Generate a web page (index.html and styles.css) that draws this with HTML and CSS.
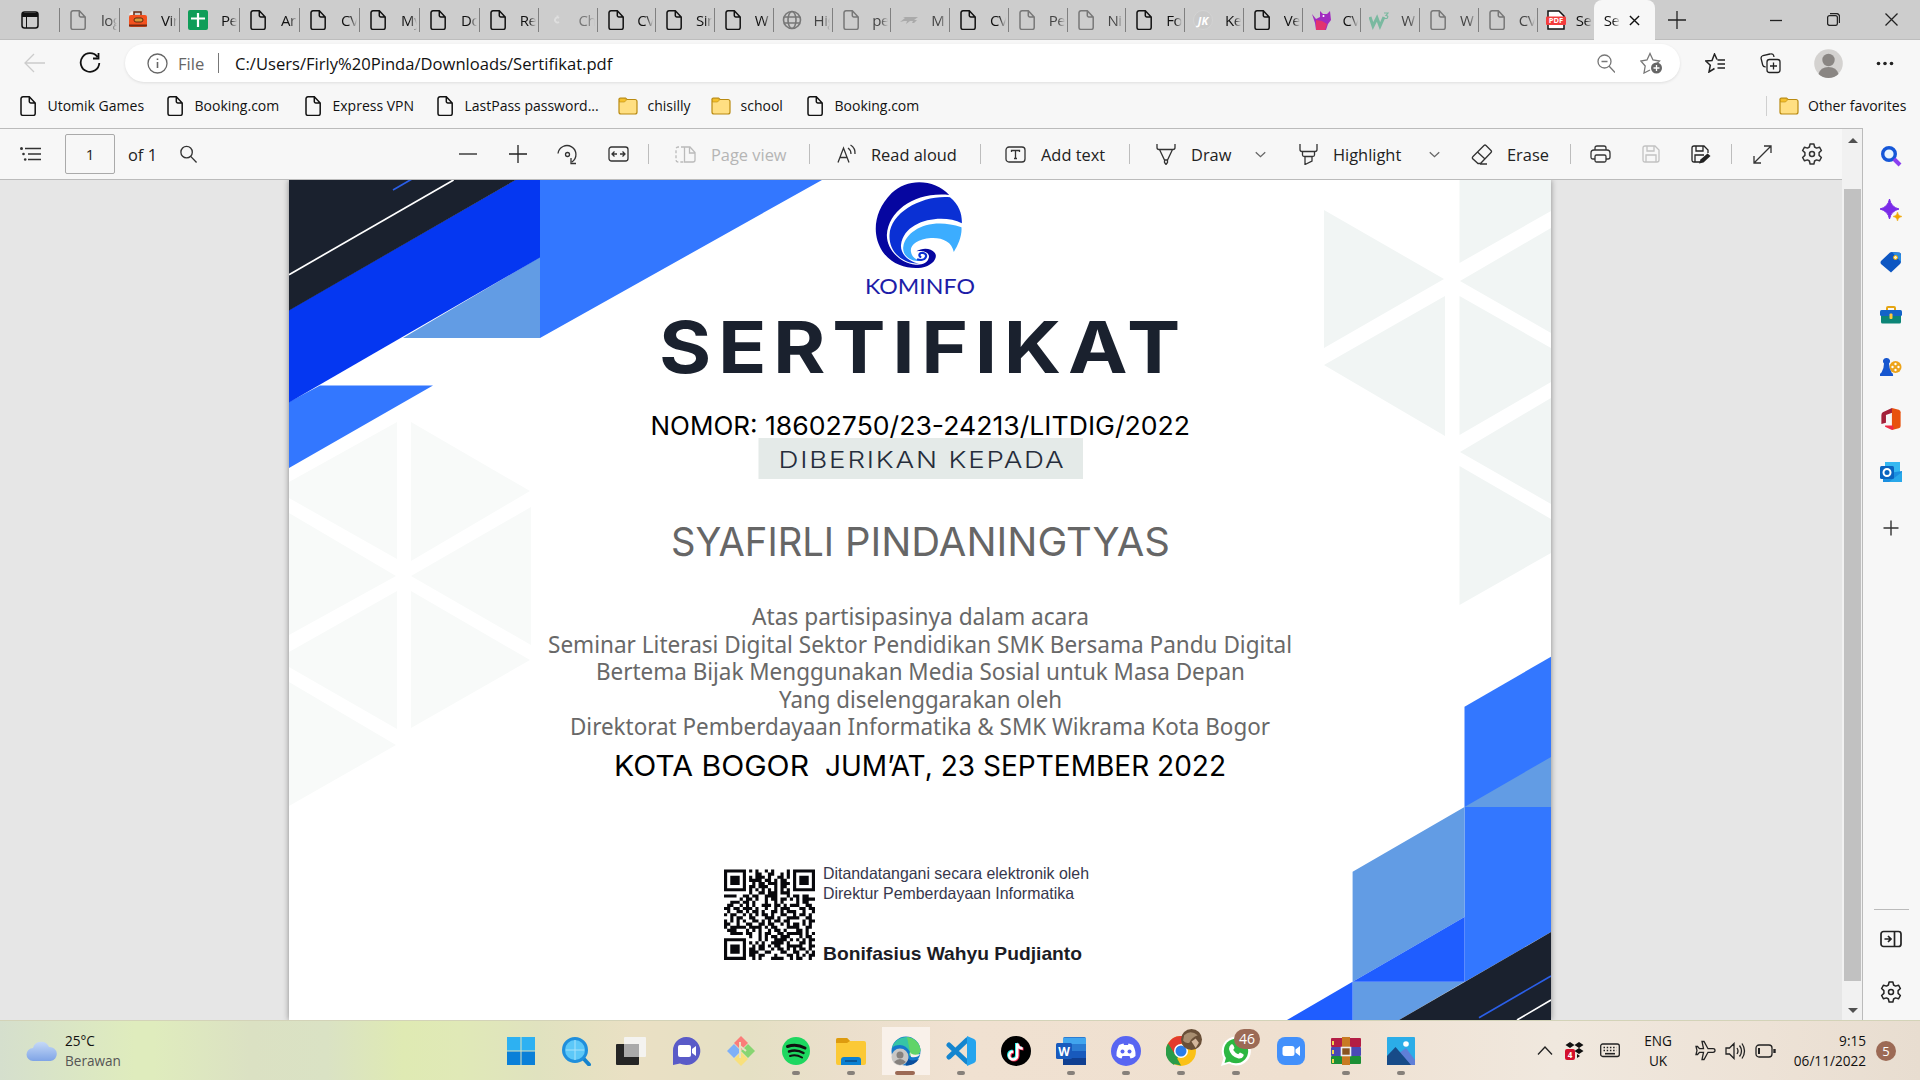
FILE: index.html
```html
<!DOCTYPE html>
<html lang="en">
<head>
<meta charset="utf-8">
<title>Sertifikat.pdf</title>
<link rel="stylesheet" href="styles.css">
</head>
<body>
<svg class="defs" width="0" height="0">
  <defs>
    <symbol id="page" viewBox="0 0 16 20"><path d="M3 .8h6.3L15.200 7v10.400a2 2 0 0 1-2 2H3a2 2 0 0 1-2-2V2.800a2 2 0 0 1 2-2zM9.300.8V5.500a1.500 1.500 0 0 0 1.500 1.500h4.400" fill="none" stroke="currentColor" stroke-width="1.500"/></symbol>
    <symbol id="folder" viewBox="0 0 20 18"><path d="M1 3v12a2 2 0 0 0 2 2h14a2 2 0 0 0 2-2V4.500a2 2 0 0 0-2-2H9L7.500 1H2.500A1.500 1.500 0 0 0 1 3z" fill="#ffdf82" stroke="#b98a10" stroke-width="1.200"/><path d="M1.500 5V2.500Q1.500 1.500 3 1.500h4l1.500 1.500L6.500 5z" fill="#f5c02c" stroke="#b98a10" stroke-width=".6"/></symbol>
    <symbol id="cog" viewBox="0 0 22 22"><path d="M9.100 1h3.800l.7 3 1.900 1.100 3-.9 1.900 3.300-2.300 2.100v2.800l2.300 2.100-1.900 3.300-3-.9-1.900 1.100-.7 3H9.100l-.7-3-1.900-1.100-3 .9-1.900-3.300 2.300-2.100V9.600L1.600 7.500l1.900-3.300 3 .9L8.400 4z" fill="none" stroke="currentColor" stroke-width="1.500" stroke-linejoin="round"/><circle cx="11" cy="11" r="2.500" fill="none" stroke="currentColor" stroke-width="1.500"/></symbol>
    <symbol id="lens" viewBox="0 0 20 20"><g fill="none" stroke="currentColor" stroke-width="1.400"><circle cx="8" cy="7.500" r="6"/><path d="M12.300 12l6.200 6.500"/></g></symbol>
    <symbol id="chev" viewBox="0 0 10 10"><path d="M.7 3l4.300 4 4.300-4" fill="none" stroke="#666" stroke-width="1.200"/></symbol>
  </defs>
</svg>

<header class="tabs">
  <svg class="tabmenu" viewBox="0 0 18 18" width="18" height="18"><rect x="1" y="1" width="16" height="16" rx="2.500" fill="none" stroke="#111" stroke-width="1.500"/><path d="M1 2h16v4H1z" fill="#111"/><path d="M5.500 6v11" stroke="#111"/></svg>
  <div class="tab dim"><svg class="fv"><use href="#page"/></svg><span>log</span></div>
  <div class="tab"><svg class="ic" viewBox="0 0 20 20"><path d="M1 4l3-3 2 2-3 4z" fill="#eee"/><path d="M6 5V2h7v3" fill="none" stroke="#6b2a12" stroke-width="1.500"/><rect x="1" y="5" width="18" height="12" rx="2" fill="#f4511e"/><path d="M1 15.500h18" stroke="#7a2a10" stroke-width="2"/><rect x="6" y="8" width="9" height="4" rx="2" fill="#d99a3d" stroke="#5c2a10"/></svg><span>Vir</span></div>
  <div class="tab"><svg class="ic" viewBox="0 0 20 20"><rect width="20" height="20" rx="2" fill="#0f9d58"/><path d="M10 3v14M3 8.500h14" stroke="#fff" stroke-width="2.200"/></svg><span>Pe</span></div>
  <div class="tab"><svg class="fv"><use href="#page"/></svg><span>Ar</span></div>
  <div class="tab"><svg class="fv"><use href="#page"/></svg><span>CV</span></div>
  <div class="tab"><svg class="fv"><use href="#page"/></svg><span>My</span></div>
  <div class="tab"><svg class="fv"><use href="#page"/></svg><span>Do</span></div>
  <div class="tab"><svg class="fv"><use href="#page"/></svg><span>Re</span></div>
  <div class="tab mute"><svg class="ic" viewBox="0 0 20 20"><path d="M12 8a2.500 2.500 0 1 0 0 4M10.500 5.500v2" fill="none" stroke="#dedede" stroke-width="1.800"/></svg><span>Ch</span></div>
  <div class="tab"><svg class="fv"><use href="#page"/></svg><span>CV</span></div>
  <div class="tab"><svg class="fv"><use href="#page"/></svg><span>Sin</span></div>
  <div class="tab"><svg class="fv"><use href="#page"/></svg><span>W</span></div>
  <div class="tab dim"><svg class="ic" viewBox="0 0 20 20"><g fill="none" stroke="#777" stroke-width="1.600"><circle cx="10" cy="10" r="8.500"/><ellipse cx="10" cy="10" rx="4" ry="8.500"/><path d="M2 7h16M2 13h16"/></g></svg><span>Hig</span></div>
  <div class="tab dim"><svg class="fv"><use href="#page"/></svg><span>pe</span></div>
  <div class="tab dim"><svg class="ic" viewBox="0 0 20 20"><path d="M1 12l5-4-2-1h15l-4 3h3l-3 3h-2l1-2h-3l-4 3 1-3H5z" fill="#aaa"/></svg><span>M</span></div>
  <div class="tab"><svg class="fv"><use href="#page"/></svg><span>CV</span></div>
  <div class="tab dim"><svg class="fv"><use href="#page"/></svg><span>Pe</span></div>
  <div class="tab dim"><svg class="fv"><use href="#page"/></svg><span>Ni</span></div>
  <div class="tab"><svg class="fv"><use href="#page"/></svg><span>Fo</span></div>
  <div class="tab"><svg class="ic" viewBox="0 0 20 20"><circle cx="10" cy="10" r="9.500" fill="#c9c9c9" stroke="#d6d6d6" stroke-width=".6"/><text x="10" y="14.500" class="jk">JK</text></svg><span>Ke</span></div>
  <div class="tab"><svg class="fv"><use href="#page"/></svg><span>Ve</span></div>
  <div class="tab"><svg class="ic" viewBox="0 0 20 20"><path d="M1 4l4 5 4-2V1l3 3h4l3-3 1 9-3 4-2 6H5L4 13z" fill="#a22bc0"/><path d="M5 10l6 1 5 3-2 6H5z" fill="#e2336f"/><circle cx="12.500" cy="6" r="1" fill="#fff"/></svg><span>CV</span></div>
  <div class="tab dim"><svg class="ic" viewBox="0 0 20 20"><path d="M1 7l3 9 4-8 3 8 4-9" fill="none" stroke="#7ab9a0" stroke-width="3"/><path d="M15 3h4l-2 2.500q3 0 1 3h-3" fill="none" stroke="#7ab9a0" stroke-width="1.200"/></svg><span>W</span></div>
  <div class="tab dim"><svg class="fv"><use href="#page"/></svg><span>W</span></div>
  <div class="tab dim"><svg class="fv"><use href="#page"/></svg><span>CV</span></div>
  <div class="tab"><svg class="ic" viewBox="0 0 20 20"><path d="M2 1h11l5 5v13H2z" fill="#fff" stroke="#111" stroke-width="1.500"/><rect y="6.500" width="20" height="8.500" rx="1" fill="#f33d3d"/><text x="10" y="13.300" class="pdft">PDF</text></svg><span>Se</span></div>
  <div class="tab active"><span>Se</span><svg viewBox="0 0 12 12" width="11" height="11"><path d="M1 1l10 10M11 1L1 11" stroke="#111" stroke-width="1.500"/></svg></div>
  <svg class="g w18" viewBox="0 0 18 18"><path d="M9 0v18M0 9h18"/></svg>
  <svg class="g w12" viewBox="0 0 12 12"><path d="M0 6.500h12"/></svg>
  <svg class="g w13" viewBox="0 0 13 13"><rect x=".6" y="2.600" width="9.800" height="9.800" rx="2"/><path d="M3 .6h6.500a3 3 0 0 1 3 3V10"/></svg>
  <svg class="g w13" viewBox="0 0 13 13"><path d="M.5.500l12 12M12.500.500l-12 12"/></svg>
</header>

<div class="nav">
  <svg class="l" width="21" height="20" viewBox="0 0 21 20" stroke="#ccc"><path d="M21 10H1M10 1L1 10l9 9"/></svg>
  <svg class="l reload" width="22" height="22" viewBox="0 0 22 22" stroke="#111"><path d="M18.500 5A9.300 9.300 0 1 0 20.300 11M19.500 1v5.500H14"/></svg>
  <div class="omni">
    <svg class="l" width="21" height="21" viewBox="0 0 21 21" stroke="#666"><circle cx="10.500" cy="10.500" r="9.500"/><path d="M10.500 9v6M10.500 5.500v1.600" stroke-width="1.600"/></svg>
    <span class="file">File</span><i></i><span class="url">C:/Users/Firly%20Pinda/Downloads/Sertifikat.pdf</span>
    <svg class="l" width="18" height="19" viewBox="0 0 18 19" stroke="#777"><circle cx="7.500" cy="7.500" r="6.500"/><path d="M12 12l6 6.500M4.500 7.500h6"/></svg>
    <svg class="l" width="23" height="22" viewBox="0 0 23 22" stroke="#777"><path d="M10 18l-6 3 1.200-7L.8 9l6.200-1L10 1.500 13 8l6.500 1-2.500 2.500"/><circle cx="16.500" cy="16" r="5.500" fill="#666" stroke="none"/><path d="M16.500 13v6M13.500 16h6" stroke="#fff"/></svg>
  </div>
  <svg class="l" width="21" height="20" viewBox="0 0 21 20" stroke="#222"><path d="M12 6.500L9.500 1 7 7.500.8 8l4.500 4.200L4 19l5.500-3.500M12.500 7H20M12.500 11H20M12.500 15H20" stroke-width="1.500"/></svg>
  <svg class="l" width="21" height="21" viewBox="0 0 21 21" stroke="#222"><rect x="7" y="6.500" width="13" height="13" rx="2.500"/><path d="M13.500 9.500v7M10 13h7M14 4q-.5-4-4-3L3 2.500Q.5 3.500 1.200 6l1.500 6q.5 2 3 1.800"/></svg>
  <svg class="l" width="29" height="29" viewBox="0 0 29 29"><circle cx="14.500" cy="14.500" r="14.300" fill="#d4d2d0"/><circle cx="14.500" cy="11" r="6.200" fill="#8a8683"/><path d="M4.500 25q2-7 10-7t10 7q-4 4-10 4t-10-4z" fill="#8a8683"/></svg>
  <svg class="l" width="18" height="5" viewBox="0 0 18 5"><g fill="#222"><circle cx="2.500" cy="2.500" r="1.800"/><circle cx="9" cy="2.500" r="1.800"/><circle cx="15.500" cy="2.500" r="1.800"/></g></svg>
</div>

<div class="favs">
  <span><svg class="pg"><use href="#page"/></svg>Utomik Games</span>
  <span><svg class="pg"><use href="#page"/></svg>Booking.com</span>
  <span><svg class="pg"><use href="#page"/></svg>Express VPN</span>
  <span><svg class="pg"><use href="#page"/></svg>LastPass password...</span>
  <span><svg class="fo"><use href="#folder"/></svg>chisilly</span>
  <span><svg class="fo"><use href="#folder"/></svg>school</span>
  <span><svg class="pg"><use href="#page"/></svg>Booking.com</span>
  <span class="other"><svg class="fo"><use href="#folder"/></svg>Other favorites</span>
</div>

<main class="main">
  <section class="viewer">
    <div class="pdfbar">
      <svg class="l" width="21" height="16" viewBox="0 0 21 16" stroke="#333"><path d="M5 2.500h16M8 8h13M8 13.500h13"/><g fill="#333" stroke="none"><circle cx="1.500" cy="2.500" r="1.500"/><circle cx="3.500" cy="8" r="1.300"/><circle cx="5.200" cy="13.500" r="1.300"/></g></svg>
      <div class="num">1</div>
      <span>of 1</span>
      <svg class="s19"><use href="#lens"/></svg>
      <svg class="l" width="18" height="18" viewBox="0 0 18 18" stroke="#222"><path d="M0 9h18"/></svg>
      <svg class="l" width="18" height="18" viewBox="0 0 18 18" stroke="#222"><path d="M0 9h18M9 0v18"/></svg>
      <svg class="l" width="22" height="22" viewBox="0 0 22 22" stroke="#333"><path d="M1 10.500A9 9 0 1 1 15 19M14 15v5.500h5"/><circle cx="10.500" cy="11.500" r="2"/></svg>
      <svg class="l" width="21" height="16" viewBox="0 0 21 16" stroke="#333"><rect x="1" y="1" width="19" height="14" rx="2.500"/><path d="M9 8H4M6.500 5.500L4 8l2.500 2.500M12 8h5M14.500 5.500L17 8l-2.500 2.500"/></svg>
      <i></i>
      <svg class="l" width="21" height="17" viewBox="0 0 21 17" stroke="#bbb"><path d="M9 1H3a2 2 0 0 0-2 2v11a2 2 0 0 0 2 2h6" stroke-dasharray="3 2"/><path d="M9.500 1v15H18a2 2 0 0 0 2-2V6.500L15 1zM14.500 1v6H20"/></svg>
      <span class="off">Page view</span>
      <i></i>
      <svg class="l" width="20" height="20" viewBox="0 0 20 20" stroke="#333"><path d="M1 18.500L6.500 4 12 18.500M3 13.500h7M11 4q3 2 3 6M13.500 1q5 3 4.500 9" /></svg>
      <span>Read aloud</span>
      <i></i>
      <svg class="l" width="21" height="17" viewBox="0 0 21 17" stroke="#333"><rect x="1" y="1" width="19" height="15" rx="3"/><path d="M6.500 6V4.500h8V6M10.500 4.500v8M9 12.500h3"/></svg>
      <span>Add text</span>
      <i></i>
      <svg class="l" width="20" height="21" viewBox="0 0 20 21" stroke="#333"><path d="M1 0v3.500q0 2 2 2h14q2 0 2-2V0M3.500 5.500L8.500 16h3l5-10.500M8.500 16v2.500L10 20.500l1.500-2V16"/></svg>
      <span>Draw</span>
      <svg class="cv"><use href="#chev"/></svg>
      <svg class="l" width="19" height="21" viewBox="0 0 19 21" stroke="#333"><path d="M1 0v5.500q0 2 2 2h13q2 0 2-2V0M3.500 7.500V11q0 1.500 2 1.500h8q2 0 2-1.500V7.500M6 12.500v8l7-3.500v-4.500"/></svg>
      <span>Highlight</span>
      <svg class="cv"><use href="#chev"/></svg>
      <svg class="l" width="22" height="21" viewBox="0 0 22 21" stroke="#333"><path d="M2 12.500L13 1.500q1-1 2 0l5 5q1 1 0 2L9.500 19.500H7L1.500 14.500q-.5-1 .5-2zM6.500 8L14 15M9 20h7"/></svg>
      <span>Erase</span>
      <i></i>
      <svg class="l" width="21" height="18" viewBox="0 0 21 18" stroke="#333"><path d="M5 5V3q0-2 2-2h7q2 0 2 2v2M5 14H3q-2 0-2-2V8q0-3 3-3h13q3 0 3 3v4q0 2-2 2h-2"/><rect x="5" y="10" width="11" height="7" rx="1.500"/></svg>
      <svg class="l" width="18" height="18" viewBox="0 0 18 18" stroke="#c2c2c2"><path d="M3 1h10l4 4v10q0 2-2 2H3q-2 0-2-2V3q0-2 2-2zM5 1v5h7V1M4 17v-7h10v7"/></svg>
      <svg class="l" width="20" height="19" viewBox="0 0 20 19" stroke="#222"><path d="M9 17H3q-2 0-2-2V3q0-2 2-2h10l4 4v3M5 1v5h7V1M4 17v-7h9"/><path d="M8 18.500l1.500-4 7-6 3 2.500-7 6.500z" fill="#222" stroke="none"/></svg>
      <i></i>
      <svg class="l" width="19" height="19" viewBox="0 0 19 19" stroke="#333"><path d="M1 18L18 1M11 1h7v7M1 11v7h7"/></svg>
      <svg class="s22"><use href="#cog"/></svg>
    </div>
    <div class="canvas">
      <svg class="cert" width="1262" height="840" viewBox="289 180 1262 840">
        <rect x="289" y="180" width="1262" height="840" fill="#fff"/>
        <path fill="#f8faf9" d="M397 422V559L289 498V482zM411 422L530 491 411 561zM531 507V645L411 576zM289 513L396 576 289 635zM397 591V729L289 667V652zM411 591V728L530 660zM289 682L396 745 289 806z"/>
        <path fill="#f1f5f4" d="M1324 210L1444 279 1324 348zM1459.500 180H1551V211L1459.500 263zM1460 281L1551 228V333zM1324 365L1445 296V436zM1459.500 296L1551 348V382L1459.500 435zM1460 452L1551 398V504zM1459.500 466L1551 519V553L1459.500 605z"/>
        <path fill="#3377ff" d="M540 180H822L540 338zM320 385.500H433L289 468V402z"/>
        <path fill="#629ce4" d="M540 257V338H403z"/>
        <path fill="#0537f1" d="M515 180H540V257.500L289 402.500V310z"/>
        <path fill="#1a212e" d="M289 180H515.500L289 310.500z"/>
        <path d="M289 274.700L453.600 180" stroke="#fff" stroke-width="1.700"/><path d="M393 190L412 179" stroke="#2b5fe8" stroke-width="1.700"/>
        <path fill="#3377ff" d="M1464.500 706.700L1551 656.700V932L1464.500 982z"/>
        <path fill="#629ce4" d="M1464.500 807L1551 757V807zM1352.600 871.700L1464.500 807V917L1352.600 981.700zM1352.600 981.700H1464.500L1399 1020H1352.600z"/>
        <path fill="#1f5dff" d="M1352.600 981.700L1464.500 917V981.700zM1287 1020L1352.600 981.700V1020z"/>
        <path fill="#1a212e" d="M1399 1020L1551 932V1020z"/>
        <path d="M1479 1017.700L1551 976" stroke="#2b5fe8" stroke-width="1.700"/><path d="M1517 1020L1551 1000" stroke="#fff" stroke-width="1.700"/>

        <g transform="translate(640 170) scale(.3827 .3333)">
          <path fill="#0606a0" d="M808 75C770 28 700 22 657 70C610 125 605 195 634 245C660 287 700 297 735 293C765 288 780 262 770 248C760 234 738 233 722 244C738 240 757 246 755 262C752 280 735 286 720 284C680 280 645 240 645 195C650 120 720 65 808 75z"/>
          <path fill="#0a30d4" d="M810 82C835 105 842 135 841 160C790 130 690 150 682 225C680 255 705 276 730 281C680 281 650 240 652 195C655 125 740 75 810 82z"/>
          <path fill="#3cadff" d="M840 172C842 195 832 225 820 246C815 215 790 202 760 204C725 207 705 225 708 245C710 262 722 272 740 270C710 282 684 255 688 230C695 180 760 140 840 172z"/>
          <path fill="none" stroke="#0a30d4" stroke-width="6" d="M724 268C750 276 754 250 738 248C728 248 728 260 735 262"/>
        </g>
        <text class="kom" x="865" y="294" textLength="110" lengthAdjust="spacingAndGlyphs">KOMINFO</text>
        <text class="sert" x="659" y="372.500" textLength="528" lengthAdjust="spacingAndGlyphs">SERTIFIKAT</text>
        <rect x="758.500" y="438" width="324.500" height="41" fill="#e4eae8"/>
        <g class="nom">
          <text x="650.500" y="435" textLength="107" lengthAdjust="spacingAndGlyphs">NOMOR:</text>
          <text x="765" y="435" textLength="425" lengthAdjust="spacingAndGlyphs">18602750/23-24213/LITDIG/2022</text>
        </g>
        <text class="dib" x="778.500" y="467.500" textLength="287" lengthAdjust="spacingAndGlyphs">DIBERIKAN KEPADA</text>
        <g class="name">
          <text x="671" y="556" textLength="163" lengthAdjust="spacingAndGlyphs">SYAFIRLI</text>
          <text x="845" y="556" textLength="325" lengthAdjust="spacingAndGlyphs">PINDANINGTYAS</text>
        </g>
        <g class="desc">
          <text x="752" y="625" textLength="337" lengthAdjust="spacingAndGlyphs">Atas partisipasinya dalam acara</text>
          <text x="548" y="652.500" textLength="744" lengthAdjust="spacingAndGlyphs">Seminar Literasi Digital Sektor Pendidikan SMK Bersama Pandu Digital</text>
          <text x="596" y="680" textLength="649" lengthAdjust="spacingAndGlyphs">Bertema Bijak Menggunakan Media Sosial untuk Masa Depan</text>
          <text x="779" y="707.500" textLength="283" lengthAdjust="spacingAndGlyphs">Yang diselenggarakan oleh</text>
          <text x="570" y="735" textLength="700" lengthAdjust="spacingAndGlyphs">Direktorat Pemberdayaan Informatika &amp; SMK Wikrama Kota Bogor</text>
        </g>
        <g class="date">
          <text x="614" y="775.500" textLength="195" lengthAdjust="spacingAndGlyphs">KOTA BOGOR</text>
          <text x="825" y="775.500" textLength="401" lengthAdjust="spacingAndGlyphs">JUM’AT, 23 SEPTEMBER 2022</text>
        </g>
        <g class="qr" id="qr" transform="translate(724 869.500) scale(3.138 3.120)"></g>
        <text class="sig" x="823" y="879" textLength="266" lengthAdjust="spacingAndGlyphs">Ditandatangani secara elektronik oleh</text>
        <text class="sig" x="823" y="898.500" textLength="251" lengthAdjust="spacingAndGlyphs">Direktur Pemberdayaan Informatika</text>
        <text class="sigb" x="823" y="959.500" textLength="259" lengthAdjust="spacingAndGlyphs">Bonifasius Wahyu Pudjianto</text>
      </svg>
    </div>
  </section>
  <div class="scroll"><b class="up"></b><div class="thumb"></div><b class="down"></b></div>
  <aside class="side">
    <svg viewBox="0 0 22 22"><circle cx="9" cy="9" r="6.300" fill="#e8f6ff" stroke="#1557d8" stroke-width="3.400"/><path d="M14 14l6 6" stroke="#8b3ff0" stroke-width="4"/></svg>
    <svg viewBox="0 0 22 22"><path d="M9.500 0Q11 8 19 10 11 12 9.500 20 8 12 0 10 8 8 9.500 0z" fill="#7a2be8" stroke="#7a2be8"/><path d="M17.500 13q.5 4 4.500 4.500-4 .5-4.500 4.500-.5-4-4.500-4.500 4-.5 4.500-4.500z" fill="#f0a500" stroke="#f0a500" stroke-width=".5"/></svg>
    <svg viewBox="0 0 22 22"><path d="M10 1.500Q11 .8 12.500 1l7 .5Q21 2 21 3.500v7q0 1.500-1 2.500l-9 8.500L1 13q-1-1.500 0-3z" fill="#0d56c2"/><path d="M12 1l8 1 1 2v7z" fill="#2a8ae0"/><circle cx="15.500" cy="6.500" r="2" fill="#fff2c0" stroke="#e8a800"/></svg>
    <svg viewBox="0 0 22 22"><path d="M7 7V4q0-1 1-1h6q1 0 1 1v3" fill="none" stroke="#e5a512" stroke-width="2"/><rect x="1" y="9" width="20" height="10.500" rx="1.500" fill="#0c8577"/><rect y="6" width="22" height="6" rx="1.500" fill="#1463c8"/><rect x="9.500" y="9.500" width="3" height="5.500" rx="1" fill="#ffc83d"/></svg>
    <svg viewBox="0 0 22 22"><circle cx="15.500" cy="11" r="6" fill="#eda41a"/><g fill="#fff"><circle cx="15.500" cy="8" r="1.200"/><circle cx="18.500" cy="11" r="1.200"/><circle cx="15.500" cy="14" r="1.200"/><circle cx="12.500" cy="11" r="1.200"/></g><path d="M6.500 2a3.200 3.200 0 0 1 2.500 5.500q0 5 2.500 9 2 1 1.500 3.500H0q-.5-2.500 1.500-3.500 2.500-4 2.500-9A3.200 3.200 0 0 1 6.500 2z" fill="#1656cf"/></svg>
    <svg viewBox="0 0 22 24"><path d="M12 0L2 4.500Q.5 5.500.5 8v9.500L5.500 16V7.500L13 5z" fill="#a3203a"/><path d="M12 0l7.500 2q2 .7 2 2.500v15q0 1.800-2 2.500L12 24z" fill="#e8520e"/><path d="M13 19H4.500v1.500L12 24l2-1z" fill="#ef2b46"/></svg>
    <svg viewBox="0 0 22 22"><rect x="5" y="1" width="15" height="12" fill="#35b8f1"/><path d="M3 13l19-3v11H3z" fill="#1a8fe0"/><path d="M9 21l13-10v10z" fill="#28a8ea"/><rect x="0" y="5" width="14" height="13" rx="1.500" fill="#0a64c0"/><circle cx="7" cy="11.500" r="3.500" fill="none" stroke="#fff" stroke-width="2"/></svg>
    <svg viewBox="0 0 22 22" stroke="#333" stroke-width="1.400"><path d="M11 3.500v15M3.500 11h15"/></svg>
    <hr>
    <svg viewBox="0 0 22 22" fill="none" stroke="#222" stroke-width="1.700"><rect x="1" y="3.500" width="20" height="15" rx="2.500"/><path d="M14.500 3.500v15M4.500 11h6.500M8 8l3 3-3 3"/></svg>
    <svg viewBox="0 0 22 22"><use href="#cog" width="22" height="22"/></svg>
  </aside>
</main>

<footer class="task">
  <div class="weather">
    <svg width="31" height="22" viewBox="0 0 31 22"><defs><linearGradient id="cl" x2="0" y2="1"><stop stop-color="#c5d9f7"/><stop offset="1" stop-color="#7fa4e6"/></linearGradient></defs><path d="M7 21a6.500 6.500 0 0 1 0-13 8.500 8.500 0 0 1 16-1 7 7 0 0 1 1.500 14z" fill="url(#cl)"/></svg>
    <div>25°C<br><em>Berawan</em></div>
  </div>
  <div class="apps">
    <div><svg viewBox="0 0 30 30"><g fill="#1593e6"><path d="M1 1h13.500v13.500H1zM15.500 1H29v13.500H15.500z" fill="#2db1f2"/><path d="M1 15.500h13.500V29H1zM15.500 15.500H29V29H15.500z" fill="#0a80d8"/></g></svg></div>
    <div><svg viewBox="0 0 30 30"><path d="M22 22l6 6.500" stroke="#1583cd" stroke-width="4" stroke-linecap="round"/><circle cx="14" cy="14" r="11.500" fill="#5cc8f8" stroke="#1f8fdc" stroke-width="3"/><path d="M14 4v20M5 14h18" stroke="#a5e2fb"/></svg></div>
    <div><svg viewBox="0 0 30 30"><rect x="0" y="8" width="23" height="21" rx="1" fill="#252525"/><rect x="8" y="1" width="22" height="20" rx="1" fill="#f5f5f5" opacity=".9"/><rect x="8" y="8" width="15" height="13" fill="#aaa"/></svg></div>
    <div><svg viewBox="0 0 30 30"><path d="M15 1a14 14 0 1 1-6 26.500L2 29V15A13.500 13.500 0 0 1 15 1z" fill="#5a5bc8"/><rect x="7" y="9" width="13" height="12" rx="2" fill="#fff"/><path d="M21 13l4-3v10l-4-3z" fill="#fff"/></svg></div>
    <div><svg viewBox="0 0 30 30"><path d="M15 0l7 7-7 7-7-7z" fill="#fb7d79"/><path d="M8 8l7 7-7 7-7-7z" fill="#7fb0f7"/><path d="M22 8l7 7-7 7-7-7z" fill="#87d572"/><path d="M15 16l7 7-7 7-7-7z" fill="#f8e07c"/><path d="M14 6v16M14 10l6 5" stroke="#e8e2c2" stroke-width="2"/></svg></div>
    <div class="run"><svg viewBox="0 0 30 30"><circle cx="15" cy="15" r="14" fill="#1ed760"/><g fill="none" stroke="#111" stroke-linecap="round"><path d="M6.500 10.500q9-3 17.500 1.500" stroke-width="3"/><path d="M8 15.500q7.500-2.500 14.500 1.500" stroke-width="2.500"/><path d="M9 20q6-2 12 1.500" stroke-width="2"/></g></svg></div>
    <div class="run"><svg viewBox="0 0 30 30"><path d="M0 4q0-2 2-2h9l3 3h14q2 0 2 2v20q0 2-2 2H2q-2 0-2-2z" fill="#fbc936"/><path d="M0 4q0-2 2-2h9l3 3-3 2H0z" fill="#dd9b0f"/><path d="M5 29v-5q0-3 3-3h14q3 0 3 3v5z" fill="#0b80d2"/><path d="M9 25h12" stroke="#0b4b86" stroke-width="1.500"/></svg></div>
    <div class="run now"><svg viewBox="0 0 30 30"><circle cx="15" cy="15" r="14.500" fill="#1679cc"/><path d="M1 12A14.500 14.500 0 0 1 29.500 14q-1 7-10 6-2-1-.500-4Q15 9 9 9T1 12z" fill="#36c5a6"/><path d="M16 1a14.500 14.500 0 0 1 13.500 13q-1 7-10 6-2-1-.5-4z" fill="#60d468"/><path d="M19 16q2 4 10 2-2 4-9 3z" fill="#f9f1ea"/><path d="M14 20q5 7 14 3-5 7-13 6.500z" fill="#0b4f9e"/><circle cx="9" cy="21" r="8.500" fill="#c9c7c5"/><circle cx="9" cy="19" r="3.500" fill="#86817e"/><path d="M3 26q6-6 12 0-6 6-12 0z" fill="#86817e"/></svg></div>
    <div class="run"><svg viewBox="0 0 30 30"><path d="M3 21L21 4M3 9l18 17" stroke="#1485cf" stroke-width="5" stroke-linecap="round"/><path d="M21 0l7 3q2 1 2 3v18q0 2-2 3l-7 3z" fill="#25a4ee"/></svg></div>
    <div><svg viewBox="0 0 30 30"><circle cx="15" cy="15" r="15" fill="#000"/><g fill="none" stroke-width="3"><path d="M15.500 7v12a4 4 0 1 1-4-4M15.500 7q1 5 5.500 5" stroke="#25f4ee"/><path d="M17 8v12a4 4 0 1 1-4-4M17 8q1 5 5.500 5" stroke="#fe2c55"/><path d="M16.200 7.500v12a4 4 0 1 1-4-4M16.200 7.500q1 5 5.500 5" stroke="#fff" stroke-width="2.500"/></g></svg></div>
    <div class="run"><svg viewBox="0 0 30 30"><rect x="7" y="1" width="23" height="28" rx="1.500" fill="#2b7cd3"/><path d="M7 2h23v6H7z" fill="#41a5ee"/><path d="M7 15h23v7H7z" fill="#185abd"/><path d="M7 22h23v7H7z" fill="#103f91"/><rect x="0" y="7" width="16" height="16" rx="1.500" fill="#185abd"/><text x="8" y="19.500" class="wd">W</text></svg></div>
    <div class="run"><svg viewBox="0 0 30 30"><circle cx="15" cy="15" r="15" fill="#5865f2"/><path d="M8 9q3-1.500 4.500-1.500L13 9h4l.5-1.500Q19 7.500 22 9q3 6 2.500 11-2 2-5 2.500L18.500 20h-7l-1 2.500q-3-.5-5-2.500Q5 15 8 9z" fill="#fff"/><circle cx="11.500" cy="15.500" r="2" fill="#5865f2"/><circle cx="18.500" cy="15.500" r="2" fill="#5865f2"/></svg></div>
    <div class="run"><svg viewBox="0 0 30 30"><circle cx="15" cy="15" r="15" fill="#fbc116"/><path d="M15 15L8 29A15 15 0 0 1 2 7.500z" fill="#2a9c48"/><path d="M2 7.500A15 15 0 0 1 28 7.500H15L9 19z" fill="#e33b2e"/><path d="M9 18.500L15 29.500 8 28 2 7.500z" fill="#2a9c48"/><circle cx="15" cy="15" r="7" fill="#fff"/><circle cx="15" cy="15" r="5.500" fill="#2b7de9"/></svg><svg class="pic" viewBox="0 0 20 20"><circle cx="10" cy="10" r="10" fill="#6a5038"/><path d="M3 6q6-6 13 0-6 2-8 7-4 1-6-2z" fill="#a88e70"/><path d="M10 12l4-3 3 4-3 5z" fill="#d4b79c"/></svg></div>
    <div class="run"><svg viewBox="0 0 30 30"><path d="M15 .5A14.500 14.500 0 1 1 8 27.500L0 30l2.500-8A14.500 14.500 0 0 1 15 .5z" fill="#fff"/><circle cx="15" cy="15" r="12.200" fill="#2cb742"/><path d="M3.500 27l2-7 5 5z" fill="#2cb742"/><path d="M10 8.500q1.500-1 2.500 1l1 2.500-1.300 2q2 3 5 4.300l1.800-1.800 3 1.500q1 .5.500 2-1.500 3-5 2.500-8-2-9.500-9.500 0-3 2-4.500z" fill="#fff"/></svg><b class="cnt">46</b></div>
    <div><svg viewBox="0 0 30 30"><rect x="1" y="1" width="28" height="28" rx="8" fill="#4290fb"/><rect x="6.500" y="10" width="12" height="10" rx="2.500" fill="#fff"/><path d="M19.500 13.500L24 10v10l-4.500-3.500z" fill="#fff"/></svg></div>
    <div class="run"><svg viewBox="0 0 30 30"><rect y="2" width="30" height="9" rx="1" fill="#b31d45"/><rect y="11" width="30" height="9" rx="1" fill="#4a49b5"/><rect y="20" width="30" height="8" rx="1" fill="#1c8f35"/><path d="M2 5v4M2 14v4M2 23v4" stroke="#f2d452" stroke-width="2"/><rect x="11" y="1" width="8" height="28" fill="#c87a22"/><rect x="10.500" y="11.500" width="9" height="8" fill="#8a5420" stroke="#eee" stroke-width="1.600"/></svg></div>
    <div class="run"><svg viewBox="0 0 30 30"><rect x="1" y="1" width="28" height="28" rx="1" fill="#2bade8"/><path d="M12 18l8-6 9 12v5H12z" fill="#5f7fd8"/><path d="M1 20L9.500 11 25 29H1z" fill="#174b88"/><circle cx="20" cy="8" r="2.800" fill="#fff"/></svg></div>
  </div>
  <div class="tray">
    <svg class="l" width="16" height="9" viewBox="0 0 16 9" stroke="#222"><path d="M1 8.500L8 1l7 7.500"/></svg>
    <svg width="20" height="20" viewBox="0 0 20 20"><path d="M5 1l4.500 3L5 7 .5 4zM14 1l4.500 3L14 7 9.500 4zM14 7l4.500 3L14 13 9.500 10zM12 13l3 2-3 2z" fill="#111"/><rect x="0" y="8" width="10" height="11" rx="2" fill="#d4102c"/><text x="5" y="17" class="four">4</text></svg>
    <svg class="l" width="20" height="15" viewBox="0 0 20 15" stroke="#222"><rect x=".7" y="1" width="18.600" height="12.500" rx="2"/><path d="M3.500 4.500h13M3.500 7.500h13" stroke-dasharray="1.500 1.700"/><path d="M5 10.700h10" stroke-width="1.600"/></svg>
    <div class="lang">ENG<br>UK</div>
    <svg class="l" width="21" height="21" viewBox="0 0 21 21" stroke="#222"><path d="M20 10.500q0-1.800-2-1.800h-5L9 1.500H7l1.500 7.200H4.500L2.500 6.500H1l1 4-1 4h1.500l2-2.200h4L7 19.500h2l4-7.200h5q2 0 2-1.800z"/></svg>
    <svg class="l" width="21" height="18" viewBox="0 0 21 18" stroke="#222"><path d="M1 6v6h3.500L9 16.500v-15L4.500 6zM12 6q2 3 0 6M14.500 3.500q4 5.500 0 11M17 1.500q5 7.500 0 15"/></svg>
    <svg class="l" width="21" height="14" viewBox="0 0 21 14" stroke="#222"><rect x="1" y="1" width="16" height="12" rx="3"/><path d="M19.500 5v4" stroke-width="2.400"/><path d="M4 4v6" stroke-width="2"/></svg>
    <div class="clock">9:15<br>06/11/2022</div>
    <b class="five">5</b>
  </div>
</footer>
<script src="qr.js"></script>
</body>
</html>
```
FILE: styles.css
```css
* { box-sizing: border-box; }
body { margin: 0; width: 1920px; height: 1080px; overflow: hidden; display: flex; flex-direction: column; background: #f7f7f7; color: #111; font-family: "Open Sans", "Noto Sans", sans-serif; font-size: 14px; }
svg { display: block; flex: none; }
.defs { position: absolute; }
.l { fill: none; stroke-width: 1.3; }

.tabs { height: 40px; flex: none; background: #cdcdcd; border-bottom: 1px solid #bdbdbd; display: grid; grid-template-columns: 59px repeat(7, 60px) repeat(18, 58.78px) 57px 74px 102px 57px 58px 1fr; align-items: center; }
.tabmenu { margin-left: 21px; }
.tab { height: 24px; border-left: 1px solid #808080; display: flex; align-items: center; padding-left: 10px; font-size: 15px; }
.tab span { width: 16px; overflow: hidden; white-space: nowrap; margin-left: auto; margin-right: 2px; letter-spacing: -.5px; -webkit-mask-image: linear-gradient(90deg, #000 55%, transparent); mask-image: linear-gradient(90deg, #000 55%, transparent); }
.tab.dim { color: #777; }
.tab.dim span { color: #444; }
.tab.mute span { color: #777; }
.fv { width: 16px; height: 20px; }
.ic { width: 20px; height: 20px; margin-left: -2px; }
.jk { font: italic bold 11px "Open Sans", sans-serif; fill: #fff; text-anchor: middle; }
.pdft { font: bold 7.5px "Open Sans", sans-serif; fill: #fff; text-anchor: middle; }
.wd { font: bold 12px "Open Sans", sans-serif; fill: #fff; text-anchor: middle; }
.tab.active { height: 40px; align-self: end; margin-bottom: -1px; border: 0; border-radius: 8px 8px 0 0; background: #f7f7f7; width: 61px; padding-left: 10px; }
.tab.active span { margin: 0 9px 0 0; }
.g { fill: none; stroke: #222; stroke-width: 1.3; }
.w18 { width: 18px; height: 18px; }
.w12 { width: 12px; height: 12px; }
.w13 { width: 13px; height: 13px; }

.nav { height: 44px; flex: none; display: grid; grid-template-columns: 55px 46px 1580px 55px 54px 62px 1fr; padding-left: 24px; align-items: center; padding-top: 2px; }
.reload { stroke-width: 1.8; }
.omni { width: 1555px; height: 38px; border-radius: 19px; background: #fff; box-shadow: 0 1px 3px rgba(0,0,0,.1); display: flex; align-items: center; padding: 0 17px 0 22px; font-size: 16.6px; }
.omni .file { color: #666; margin-left: 10px; width: 40px; }
.omni i { width: 1px; height: 20px; background: #777; margin-right: 16px; }
.url { flex: 1; white-space: nowrap; }
.omni svg:last-child { margin-left: 25px; }

.favs { height: 44px; flex: none; display: grid; grid-template-columns: 147px 138px 132px 181px 93px 96px 959px 1fr; padding: 0 0 1px 20px; align-items: center; font-size: 14px; }
.favs span { display: flex; align-items: center; gap: 11.500px; white-space: nowrap; }
.pg { width: 16px; height: 20px; }
.fo { width: 20px; height: 18px; margin-right: -2px; }
.favs .other { border-left: 1px solid #d0d0d0; height: 20px; padding-left: 12px; gap: 11px; }

.main { height: 892px; flex: none; display: flex; }
.viewer { width: 1842px; border-top: 1px solid #bbb; }
.pdfbar { height: 51px; border-bottom: 1px solid #bbb; display: grid; align-items: center; padding-left: 20px; font-size: 16.4px; color: #222; white-space: nowrap;
  grid-template-columns: 45px 63px 51px 280px 50px 48px 51px 40px 27px 36px 98px 28px 34px 109px 25px 36px 88px 27px 35px 64px 44px 34px 96px 42px 36px 63px 20px 52px 49px 40px 22px 48px 1fr; }
.pdfbar i { width: 1px; height: 20px; background: #bdbdbd; }
.pdfbar .off { color: #b5b5b5; }
.num { width: 50px; height: 40px; border: 1px solid #aaa; border-radius: 2px; display: flex; align-items: center; justify-content: center; font-size: 15px; }
.s19 { width: 19px; height: 19px; color: #333; }
.s22 { width: 22px; height: 22px; color: #333; }
.cv { width: 11px; height: 11px; }
.canvas { height: 840px; background: #e6e6e6; overflow: hidden; }
.cert { margin-left: 289px; box-shadow: 0 0 6px rgba(0,0,0,.4); }
.scroll { width: 20px; background: #f1f1f1; border-top: 1px solid #bbb; display: flex; flex-direction: column; align-items: center; padding: 9px 0 7px 1px; }
.thumb { width: 17px; height: 792px; background: #c1c1c1; margin-top: 46px; margin-bottom: auto; }
.up, .down { border: 5px solid transparent; width: 0; height: 0; }
.up { border-top: 0; border-bottom-color: #505050; }
.down { border-bottom: 0; border-top-color: #505050; }
.side { flex: 1; border-left: 1px solid #bbb; display: grid; grid-template-rows: 56px 52px 52px 53px 51px 54px 51px 61px 352px 57px 50px; justify-items: center; align-items: center; align-content: start; color: #222; padding-right: 1px; }
.side svg { width: 22px; height: 22px; }
.side hr { width: 35px; border: 0; border-top: 1px solid #bbb; margin: 0; align-self: end; }

.kom, .sert, .nom, .dib, .name, .desc, .date, .sig, .sigb { white-space: pre; }
.kom { font: 22px Lato, sans-serif; fill: #1d1da8; }
.sert { font: 700 72px Inter, sans-serif; fill: #1a212e; letter-spacing: 6px; }
.nom { font: 26px Inter, sans-serif; fill: #000; }
.dib { font: 300 23px Inter, sans-serif; fill: #262d3b; letter-spacing: 1.5px; }
.name { font: 40px Inter, sans-serif; fill: #666; }
.desc { font: 23px "Noto Sans", sans-serif; fill: #686868; }
.date { font: 28.5px Inter, sans-serif; fill: #000; }
.sig { font: 16.5px "Liberation Sans", sans-serif; fill: #37374c; }
.sigb { font: bold 19px "Liberation Sans", sans-serif; fill: #1c1c24; }
.qr { fill: #08080c; }

.task { height: 60px; border-top: 1px solid #d3d3b8; display: grid; grid-template-columns: 493px 1044px 1fr; align-items: center; background: linear-gradient(90deg, #d5dfcd 0, #dfecbd 7%, #dfecbd 8%, #dbe1c3 13%, #dae2c4 17%, #dfeab3 21%, #e0e9b7 24%, #e0e2bf 28%, #eae0c4 33%, #e5e0c4 39%, #ebdfcc 44%, #f0e1d1 50%, #efe0d0 68%, #f0e8de 81%, #ede2d6 92%, #e8ddd0 100%); }
.weather { display: flex; align-items: center; padding-left: 26px; gap: 8px; font-size: 13.6px; line-height: 20px; white-space: nowrap; }
.weather em { font-style: normal; color: #555; }
.apps { display: flex; height: 59px; align-items: center; }
.apps > div { width: 55px; height: 48px; position: relative; display: flex; align-items: center; justify-content: center; }
.apps > div > svg:first-child { width: 30px; height: 30px; }
.apps .run::after { content: ""; position: absolute; bottom: 0; left: 24px; width: 8px; height: 4px; border-radius: 2px; background: #86807a; }
.apps .now { background: linear-gradient(#f9f1ea, #f9f1ea) center / 48px 48px no-repeat; }
.apps .now::after { left: 17px; width: 20px; background: #9c6a55; }
.pic { position: absolute; left: 28px; top: 2px; width: 21px; height: 21px; }
.cnt { position: absolute; left: 26px; top: 2px; width: 26px; height: 20px; border-radius: 10px; background: #9c6a55; color: #fff; font: 14px/20px "Open Sans", sans-serif; text-align: center; }
.tray { display: grid; grid-template-columns: 28px 35px 35px 60px 30px 30px 32px 86px 1fr; align-items: center; font-size: 13.6px; line-height: 20px; }
.lang { text-align: center; width: 46px; }
.clock { text-align: right; width: 79px; white-space: nowrap; }
.four { font: bold 8px "Open Sans", sans-serif; fill: #fff; text-anchor: middle; }
.five { width: 20px; height: 20px; margin-left: 3px; border-radius: 10px; background: #9c6a55; color: #fff; font: 13px/20px "Open Sans", sans-serif; text-align: center; }
```
FILE: qr.js
```js
const rows = [
  "#######.#.#..#.#....#.#######",
  "#.....#...##..##..#.#.#.....#",
  "#.###.#.#.###.#..##.#.#.###.#",
  "#.###.#.####.##.#.##..#.###.#",
  "#.###.#..#.##.###.###.#.###.#",
  "#.....#.##.###..#.##..#.....#",
  "#######.#.#.#.#.#.#.#.#######",
  "........#..##.###.###........",
  "####..##.##..####...#.##.##..",
  ".....#.##.#..#.##.##.#.#.####",
  "..###.##.#...#..#.#....#.##..",
  ".##..#.#.#..###.##.#.###..##.",
  "##.##.###.#..#..#.###...##.##",
  ".#..##.#.##.#..##.#.###..#..#",
  "#.##..#.#.#.##.#..##..#.##.#.",
  "..#.##..##...###.#..####..##.",
  "#.#.#.#..##.#.#.##.##....#.##",
  "##..#..##..##.##..#.#.##.#.#.",
  "#.#####.####.#.##...####..##.",
  ".###...#.#.#..#.##.#...##.#..",
  "..####.##..#.##..##.#####.#.#",
  "........#..#.#.##.###...#.##.",
  "#######....#.#..####.#.#.#.##",
  "#.....#.#.#.#..####.#...##.#.",
  "#.###.#..#.##.#.##..#####..##",
  "#.###.#.##.##..#.##.#.#.##.#.",
  "#.###.#.###..##...##..##..#.#",
  "#.....#.##.##...#...##.#.#.##",
  "#######..#.#...####..#.##..#."
];
const path = document.createElementNS("http://www.w3.org/2000/svg", "path");
let d = "";
rows.forEach((row, y) => {
  for (const m of row.matchAll(/#+/g)) d += `M${m.index} ${y}h${m[0].length}v1h-${m[0].length}z`;
});
path.setAttribute("d", d);
document.getElementById("qr").appendChild(path);
```
